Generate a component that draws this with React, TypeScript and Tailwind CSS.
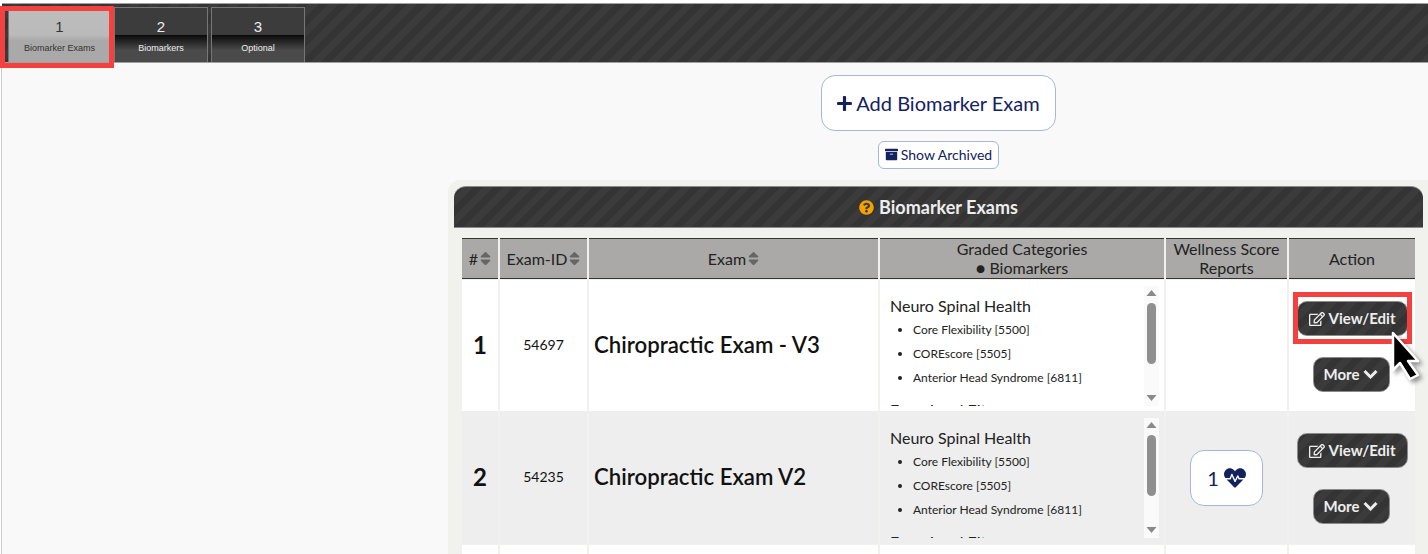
import { FaPlus, FaArchive, FaQuestionCircle, FaRegEdit, FaChevronDown, FaHeartbeat, FaSort } from "react-icons/fa"

const stripes = "bg-[repeating-linear-gradient(135deg,#343434_0px,#343434_7px,#3b3b3b_7px,#3b3b3b_14px)]"
const cols = "grid grid-cols-[36px_87px_289px_284px_121px_126px] gap-x-[2px]"

function Tab({ n, label, active, className }: { n: string; label: string; active?: boolean; className: string }) {
  return (
    <div
      className={`flex flex-col items-center border-x border-t border-[#777] font-['Liberation_Sans',sans-serif] ${className} ${
        active
          ? "bg-[linear-gradient(180deg,#bdbdbd_0%,#bababa_50%,#a9a9a9_60%,#a9a9a9_100%)] text-[#333]"
          : "bg-[linear-gradient(180deg,#3c3c3c_0%,#3c3c3c_49%,#0a0a0a_50%,#4a4a4a_78%,#4a4a4a_100%)] text-[#eee]"
      }`}
    >
      <div className="mt-[10px] text-[15px] leading-[18px]">{n}</div>
      <div className="mt-[7px] text-[9px] leading-[11px]">{label}</div>
    </div>
  )
}

function HeadCell({ children, sort }: { children: React.ReactNode; sort?: boolean }) {
  return (
    <div className="flex h-[41px] items-center justify-center border-y border-[#333] bg-[#aaa9a7] pb-[1px] text-center text-[16px] leading-[19px] text-[#222]">
      <span>{children}</span>
      {sort && <FaSort className="ml-[2px] w-[11px] text-[17px] text-[#666]" />}
    </div>
  )
}

function ScrollBar() {
  return (
    <div className="flex h-full w-[15px] shrink-0 flex-col items-center bg-[#fafafa] pt-[3px]">
      <svg width="11" height="8" viewBox="0 0 11 8" className="shrink-0"><path d="M5.5 1 10.5 7H.5z" fill="#8a8a8a" /></svg>
      <div className="mt-[6px] h-[61px] w-[9px] shrink-0 rounded-[5px] bg-[#8f8f8f]" />
      <svg width="11" height="8" viewBox="0 0 11 8" className="mt-auto mb-[4px] shrink-0"><path d="M5.5 7 .5 1h10z" fill="#8a8a8a" /></svg>
    </div>
  )
}

function Biomarkers() {
  return (
    <div className="flex h-[120px] items-start pl-[10px] pr-[5px]">
      <div className="h-full flex-1 overflow-hidden pt-[10px]">
        <div className="text-[16px] leading-[20px] text-[#222]">Neuro Spinal Health</div>
        <ul className="mt-[2px] list-disc pl-[23px] text-[12px] leading-[24px] text-[#222]">
          <li>Core Flexibility [5500]</li>
          <li>COREscore [5505]</li>
          <li>Anterior Head Syndrome [6811]</li>
        </ul>
        <div className="mt-[10px] text-[16px] leading-[20px] text-[#222]">Functional Fitness</div>
      </div>
      <ScrollBar />
    </div>
  )
}

function ActionBtn({ children, className }: { children: React.ReactNode; className: string }) {
  return (
    <button className={`flex h-[35px] shrink-0 items-center justify-center gap-[4px] rounded-[10px] border border-[#8a8a8a] text-[15px] font-bold text-[#eee] ${stripes} ${className}`}>
      {children}
    </button>
  )
}

function Row({ n, id, title, report, height, shift }: { n: string; id: string; title: string; report?: boolean; height: string; shift?: boolean }) {
  const bg = shift ? "bg-[#eeeeee]" : "bg-white"
  return (
    <div className={`${cols} ${height} text-[#111]`}>
      <div className={`flex items-center justify-center pb-[2px] text-[24px] font-bold ${bg}`}>{n}</div>
      <div className={`flex items-center justify-center pb-[2px] text-[14px] ${bg}`}>{id}</div>
      <div className={`flex items-center pb-[2px] pl-[5px] text-[22.2px] font-semibold ${bg}`}>{title}</div>
      <div className={`flex items-center ${bg}`}>
        <div className="w-full">
          <Biomarkers />
        </div>
      </div>
      <div className={`flex items-center justify-center ${bg}`}>
        {report && (
          <button className="flex h-[56px] w-[73px] items-center justify-center gap-[5px] rounded-[14px] border border-[#a6b8d6] bg-white text-[20px] text-[#14215f]">
            1 <FaHeartbeat className="text-[22px]" />
          </button>
        )}
      </div>
      <div className={`flex flex-col items-center justify-center gap-[21px] pt-[2px] ${bg}`}>
        <ActionBtn className="w-[111px]">
          <FaRegEdit className="text-[16px]" /> View/Edit
        </ActionBtn>
        <ActionBtn className="mr-[2px] w-[77px]">
          More <FaChevronDown className="stroke-current stroke-[30px] text-[15px]" />
        </ActionBtn>
      </div>
    </div>
  )
}

export default function App() {
  return (
    <div className="relative h-[554px] w-[1428px] overflow-hidden bg-white pt-[3px] font-['Lato',sans-serif]">
      {/* step tabs */}
      <div className={`ml-[2px] flex h-[60px] gap-[3px] border-y border-[#a0a0a0] pl-[6px] pt-[3px] ${stripes}`}>
        <Tab n="1" label="Biomarker Exams" active className="w-[103px]" />
        <Tab n="2" label="Biomarkers" className="w-[94px]" />
        <Tab n="3" label="Optional" className="w-[94px]" />
      </div>

      <div className="ml-[1px] flex h-[491px] border-l border-[#ccc] bg-[#f9f9f9]">
        <div className="w-[446px] shrink-0" />
        <div className="flex w-[980px] flex-col items-center pt-[12px]">
          <button className="flex h-[56px] w-[235px] shrink-0 items-center justify-center gap-[3px] rounded-[14px] border border-[#a6b8d6] bg-white text-[20px] text-[#14215f]">
            <FaPlus className="text-[17px]" /> Add Biomarker Exam
          </button>
          <button className="mt-[10px] flex h-[28px] w-[121px] shrink-0 items-center justify-center gap-[3px] rounded-[6px] border border-[#a6b8d6] bg-white pb-[1px] pl-[1px] text-[14px] text-[#14215f]">
            <FaArchive className="text-[13px]" /> Show Archived
          </button>

          <div className="mt-[11px] w-full flex-1 rounded-tl-[12px] bg-[#f1f1ee] pl-[6px] pt-[6px]">
            <div className={`flex h-[42px] w-[969px] items-center justify-center gap-[5px] rounded-t-[12px] border-y border-[#8a8a8a] text-[18px] font-bold text-[#eee] ${stripes}`}>
              <FaQuestionCircle className="text-[15px] text-[#f5a100]" /> Biomarker Exams
            </div>
            <div className="ml-[8px] mt-[10px] w-[953px]">
              <div className={cols}>
                <HeadCell sort>#</HeadCell>
                <HeadCell sort>Exam-ID</HeadCell>
                <HeadCell sort>Exam</HeadCell>
                <HeadCell>
                  Graded Categories
                  <br />● Biomarkers
                </HeadCell>
                <HeadCell>
                  Wellness Score
                  <br />
                  Reports
                </HeadCell>
                <HeadCell>Action</HeadCell>
              </div>
              <div className="mt-[1px]">
                <Row n="1" id="54697" title="Chiropractic Exam - V3" height="h-[131px]" />
                <Row n="2" id="54235" title="Chiropractic Exam V2" report shift height="h-[133px]" />
                <div className={`${cols} mt-[1px] h-[40px]`}>
                  <div className="bg-white" />
                  <div className="bg-white" />
                  <div className="bg-white" />
                  <div className="bg-white" />
                  <div className="bg-white" />
                  <div className="bg-white" />
                </div>
              </div>
            </div>
          </div>
        </div>
      </div>

      {/* annotation overlays */}
      <div className="absolute left-0 top-[6px] h-[62px] w-[114px] border-[5px] border-[#f54040]" />
      <div className="absolute left-[1293px] top-[292px] h-[52px] w-[119px] border-[5px] border-[#f54040]" />
      <svg className="absolute left-[1388px] top-[327px] drop-shadow-[3px_3px_2px_rgba(0,0,0,0.4)]" width="40" height="60" viewBox="0 0 40 60">
        <path d="M5 6v37l7-7 10 16 8-4-10-14h10z" fill="#000" stroke="#fff" strokeWidth="2.5" strokeLinejoin="round" />
      </svg>
    </div>
  )
}
